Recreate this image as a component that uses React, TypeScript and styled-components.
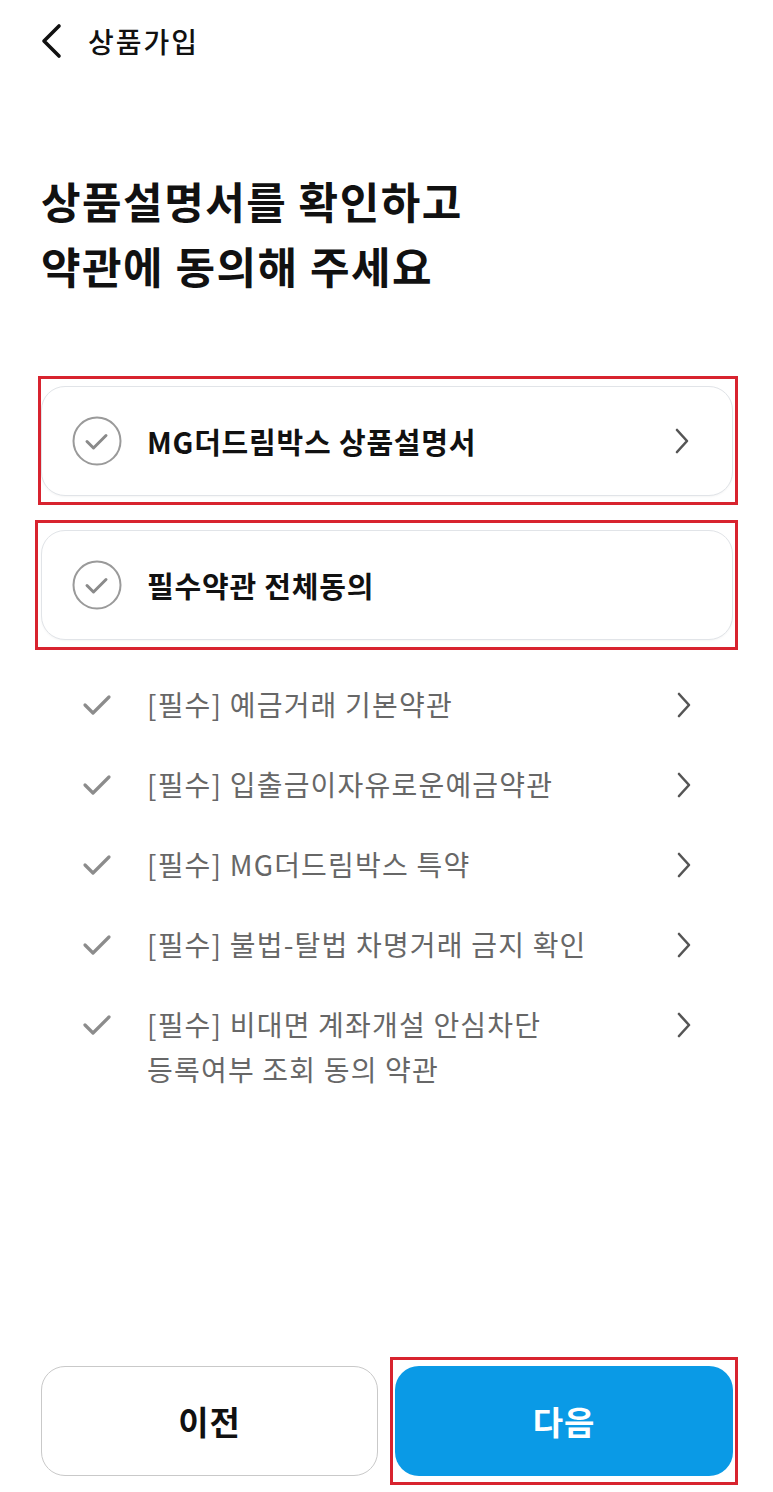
import styled, {createGlobalStyle} from "styled-components";

const GlobalStyle = createGlobalStyle`
    html, body {
        margin: 0;
        padding: 0;
        background: #fff;
    }
    body {
        font-family: "Noto Sans CJK KR", "Noto Sans", sans-serif;
        color: #111;
    }
    * {
        box-sizing: border-box;
    }
`

const Page = styled.div`
    display: flex;
    flex-direction: column;
    width: 773px;
    min-height: 1492px;
`

const Header = styled.div`
    display: flex;
    align-items: center;
    height: 82px;
    padding-left: 40px;
    gap: 24px;
`

const HeaderTitle = styled.div`
    font-size: 28px;
    font-weight: 500;
    letter-spacing: 2px;
`

const Headline = styled.h1`
    margin: 86px 0 0 41px;
    font-size: 43px;
    line-height: 65px;
    font-weight: 700;
    letter-spacing: 1.5px;
`

const Section = styled.div`
    display: flex;
    flex-direction: column;
    padding: 0 40px 0 41px;
    margin-top: 78px;
`

const Highlight = styled.div<{ $pad: string, $shift?: number }>`
    border: 3px solid #d8232f;
    padding: ${p => p.$pad};
    margin-left: ${p => -(p.$shift ?? 3)}px;
    margin-right: -5px;
`

const Card = styled.div`
    display: flex;
    align-items: center;
    height: 110px;
    padding: 0 42px 0 30px;
    border: 1px solid #e1e4e8;
    border-radius: 24px;
    background: #fff;
    box-shadow: 0 1px 2px rgba(0, 0, 0, 0.04);
`

const CardLabel = styled.div`
    flex: 1;
    margin-left: 25px;
    font-size: 29px;
    font-weight: 700;
    letter-spacing: 0.8px;
    color: #111;
`

const Terms = styled.div`
    display: flex;
    flex-direction: column;
    margin-top: 15px;
    padding: 0 81px 0 82px;
`

const TermRow = styled.div`
    display: flex;
    align-items: flex-start;
    padding: 17px 0 18px;
`

const TermIcon = styled.div`
    display: flex;
    align-items: center;
    height: 45px;
    width: 65px;
`

const TermText = styled.div`
    flex: 1;
    font-size: 28px;
    line-height: 45px;
    color: #676767;
    letter-spacing: 1.2px;
`

const ChevronBox = styled.div`
    display: flex;
    align-items: center;
    height: 45px;
`

const Footer = styled.div`
    display: flex;
    align-items: center;
    gap: 12px;
    margin-top: auto;
    padding: 0 40px 7px 41px;
`

const Button = styled.button<{ $primary?: boolean }>`
    width: ${p => p.$primary ? "338px" : "337px"};
    height: 110px;
    border-radius: 24px;
    border: ${p => p.$primary ? "none" : "1.5px solid #c9c9c9"};
    background: ${p => p.$primary ? "#0a9ae6" : "#fff"};
    color: ${p => p.$primary ? "#fff" : "#111"};
    font-family: inherit;
    font-size: 33px;
    font-weight: 700;
    letter-spacing: 1px;
    cursor: pointer;
`

const BackIcon = () => (
    <svg width="24" height="36" viewBox="0 0 24 36">
        <path d="M19 3 L4 18 L19 33" fill="none" stroke="#111" strokeWidth="3.6" strokeLinecap="round"
              strokeLinejoin="round"/>
    </svg>
)

const CircleCheck = () => (
    <svg width="50" height="50" viewBox="0 0 50 50">
        <circle cx="25" cy="25" r="23.5" fill="none" stroke="#9a9a9a" strokeWidth="2"/>
        <path d="M15 25.5 L21.5 32 L34 19.5" fill="none" stroke="#8a8a8a" strokeWidth="3"
              strokeLinecap="round" strokeLinejoin="round"/>
    </svg>
)

const SmallCheck = () => (
    <svg width="30" height="22" viewBox="0 0 30 22">
        <path d="M3 11 L11 19 L27 3" fill="none" stroke="#8c8c8c" strokeWidth="3.2" strokeLinecap="round"
              strokeLinejoin="round"/>
    </svg>
)

const Chevron = () => (
    <svg width="16" height="26" viewBox="0 0 16 26">
        <path d="M3 2 L13 13 L3 24" fill="none" stroke="#555" strokeWidth="2.6" strokeLinecap="round"
              strokeLinejoin="round"/>
    </svg>
)

const terms = [
    ["[필수] 예금거래 기본약관"],
    ["[필수] 입출금이자유로운예금약관"],
    ["[필수] MG더드림박스 특약"],
    ["[필수] 불법-탈법 차명거래 금지 확인"],
    ["[필수] 비대면 계좌개설 안심차단", "등록여부 조회 동의 약관"],
]

export default function App() {
    return (
        <>
            <GlobalStyle/>
            <Page>
                <Header>
                    <BackIcon/>
                    <HeaderTitle>상품가입</HeaderTitle>
                </Header>
                <Headline>
                    상품설명서를 확인하고<br/>
                    약관에 동의해 주세요
                </Headline>
                <Section>
                    <Highlight $pad="7px 2px 6px 0">
                        <Card>
                            <CircleCheck/>
                            <CardLabel>MG더드림박스 상품설명서</CardLabel>
                            <Chevron/>
                        </Card>
                    </Highlight>
                    <Highlight $pad="7px 2px 7px 3px" $shift={6} style={{marginTop: 15}}>
                        <Card>
                            <CircleCheck/>
                            <CardLabel>필수약관 전체동의</CardLabel>
                        </Card>
                    </Highlight>
                </Section>
                <Terms>
                    {terms.map((lines, i) => (
                        <TermRow key={i}>
                            <TermIcon><SmallCheck/></TermIcon>
                            <TermText>
                                {lines.map((l, j) => <div key={j}>{l}</div>)}
                            </TermText>
                            <ChevronBox><Chevron/></ChevronBox>
                        </TermRow>
                    ))}
                </Terms>
                <Footer>
                    <Button>이전</Button>
                    <Highlight $pad="6px 2px" $shift={0}>
                        <Button $primary>다음</Button>
                    </Highlight>
                </Footer>
            </Page>
        </>
    )
}
